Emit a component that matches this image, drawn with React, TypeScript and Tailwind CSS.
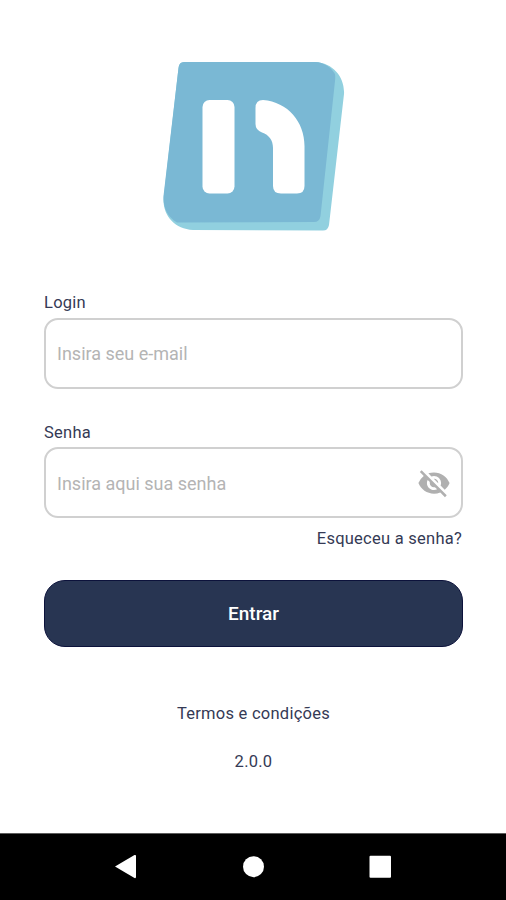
import { useState } from "react";
import { MdVisibilityOff } from "react-icons/md";

export default function App() {
  const [visible, setVisible] = useState(false);

  return (
    <div className="flex h-[900px] w-[506px] flex-col overflow-hidden bg-white font-['Roboto',sans-serif] text-[#353a55]">
      <main className="flex flex-1 flex-col pt-[60px] pr-[43px] pl-11">
        <Logo />

        <form className="mt-[59px] flex flex-col" onSubmit={(e) => e.preventDefault()}>
          <label htmlFor="login" className="h-[25px] text-[16.500px] leading-5 tracking-[0.25px]">Login</label>
          <input
            id="login"
            type="email"
            placeholder="Insira seu e-mail"
            className="h-[71px] rounded-[14px] border-2 border-[#d0d0d0] px-[11px] text-[18px] placeholder:text-[#b4b4b4] focus:outline-none"
          />

          <label htmlFor="senha" className="mt-[34px] h-[24px] text-[16.500px] leading-5 tracking-[0.25px]">Senha</label>
          <div className="flex h-[71px] items-center rounded-[14px] border-2 border-[#d0d0d0] pr-[10px] pl-[11px]">
            <input
              id="senha"
              type={visible ? "text" : "password"}
              placeholder="Insira aqui sua senha"
              className="min-w-0 flex-1 pt-px text-[18px] placeholder:text-[#b4b4b4] focus:outline-none"
            />
            <button type="button" aria-label="Mostrar senha" onClick={() => setVisible(!visible)}>
              <MdVisibilityOff className="size-[34px] text-[#b0b0b0]" />
            </button>
          </div>

          <a className="mt-[11px] mr-px self-end text-[16.500px] leading-5 tracking-[0.25px]">Esqueceu a senha?</a>

          <button
            type="submit"
            className="mt-[31px] h-[67px] rounded-[21px] border border-[#0c123b] bg-[#283552] pt-0.5 text-[19px] font-medium text-white"
          >
            Entrar
          </button>
        </form>

        <div className="mt-[57px] flex flex-col items-center gap-[28px] text-[16.500px] leading-5 tracking-[0.25px]">
          <a>Termos e condições</a>
          <span>2.0.0</span>
        </div>
      </main>

      <NavBar />
    </div>
  );
}

function Logo() {
  return (
    <svg viewBox="160 60 188 174" className="h-[174px] w-[188px] self-center">
      <path
        fill="#91d0df"
        d="M184 62H315C334 63 345 78 344 94L329 225Q328 230.500 323 230.500L193 230C175 229 163 216 163.500 199L178.500 68Q179 62 184 62Z"
      />
      <path
        fill="#7ab8d4"
        d="M184 62H315C324 62.500 331 67 335 74Q335.500 77 335 81L320.500 216Q319.500 222 314 222L177 222.500C168 217 163 208 163.500 196L178.500 68Q179 62 184 62Z"
      />
      <rect x="202.500" y="100" width="32" height="93.500" rx="7" fill="#fff" />
      <path
        fill="#fff"
        d="M263 100C288 102 304.500 122 304.500 146V186Q304.500 193.500 297 193.500H281Q273 193.500 273 186V148C273 140 269 135 262 132.500Q255.500 130 255.500 124V108Q255.500 100 263 100Z"
      />
    </svg>
  );
}

function NavBar() {
  return (
    <nav className="flex h-[67px] items-center border-t border-[#5c5c5c] bg-black text-white">
      <svg viewBox="0 1 506 66" className="h-[66px] w-[506px]" fill="currentColor">
        <path d="M115 33.500L134.500 22Q136 21.500 136 23V44Q136 45.500 134.500 45Z" />
        <circle cx="253.500" cy="33.700" r="10.500" />
        <rect x="369.500" y="22.800" width="21.500" height="22" rx="1" />
      </svg>
    </nav>
  );
}
